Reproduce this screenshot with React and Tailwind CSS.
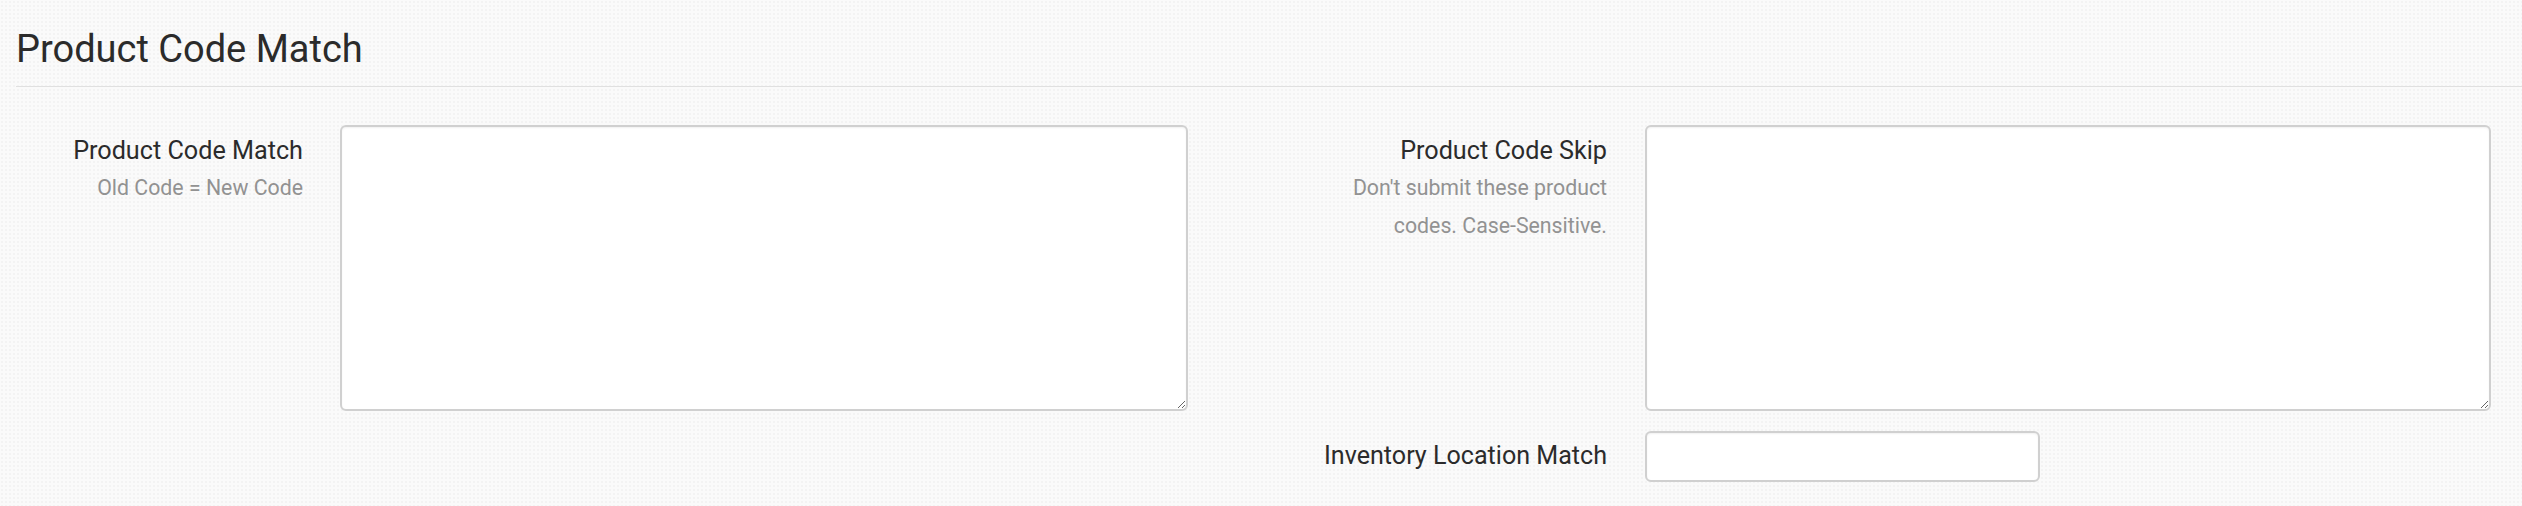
export default function App() {
  const font = { fontFamily: 'Roboto, "Liberation Sans", sans-serif' }

  return (
    <div
      style={font}
      className="min-h-[506px] w-full bg-[#fafafa] bg-[radial-gradient(#f3f3f3_1px,transparent_1px)] bg-[length:4px_4px] text-[#333] pl-4"
    >
      {/* Section heading */}
      <h2 className="pt-[27px] pb-[13px] text-[38px] leading-[1.2] font-normal text-[#2b2b2b] border-b border-[#e0e0e0]">
        Product Code Match
      </h2>

      <div className="pr-[31px]">
        {/* Row 1 */}
        <div className="flex mt-[38px]">
          <div className="flex w-[1304px] shrink-0">
            <div className="w-[324px] shrink-0 pr-[37px] text-right pt-2">
              <div className="text-[25.2px] leading-[1.46] text-[#2b2b2b]">Product Code Match</div>
              <div className="text-[21.3px] leading-[1.75] text-[#929292]">Old Code = New Code</div>
            </div>
            <textarea className="w-[848px] h-[286px] bg-white border-2 border-[#d0d0d0] rounded-[6px] shadow-[inset_0_1px_2px_rgba(0,0,0,0.06)] outline-none" />
          </div>

          <div className="flex flex-1">
            <div className="w-[325px] shrink-0 pr-[38px] text-right pt-2">
              <div className="text-[25.2px] leading-[1.46] text-[#2b2b2b]">Product Code Skip</div>
              <div className="text-[21.3px] leading-[1.75] text-[#929292]">
                Don't submit these product codes. Case-Sensitive.
              </div>
            </div>
            <textarea className="flex-1 h-[286px] bg-white border-2 border-[#d0d0d0] rounded-[6px] shadow-[inset_0_1px_2px_rgba(0,0,0,0.06)] outline-none" />
          </div>
        </div>

        {/* Row 2 */}
        <div className="flex mt-[20px]">
          <div className="w-[1304px] shrink-0" />
          <div className="flex flex-1 items-center">
            <label className="w-[325px] shrink-0 pr-[38px] text-right text-[25.1px] leading-[1.5] text-[#2b2b2b] whitespace-nowrap">
              Inventory Location Match
            </label>
            <input
              type="text"
              className="w-[395px] h-[51px] bg-white border-2 border-[#d0d0d0] rounded-[6px] shadow-[inset_0_1px_2px_rgba(0,0,0,0.06)] outline-none"
            />
          </div>
        </div>
      </div>
    </div>
  )
}
